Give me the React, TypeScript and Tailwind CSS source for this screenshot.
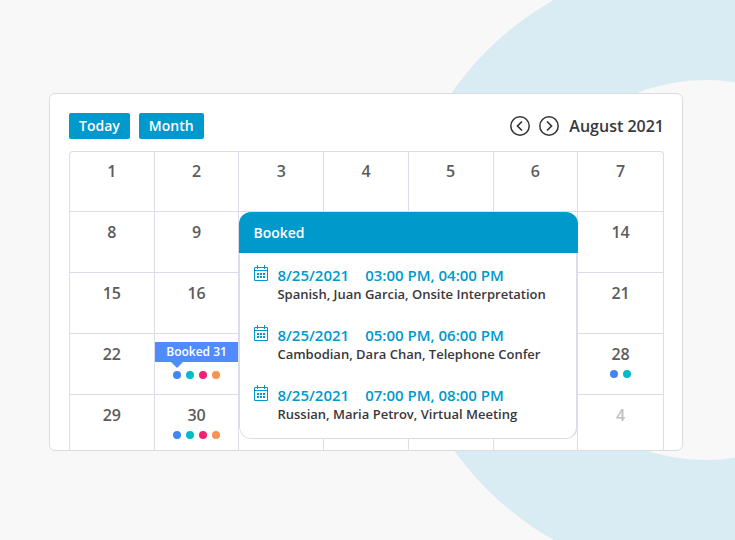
type Day = {
  day?: number;
  dots?: string[];
  tag?: string;
  muted?: boolean;
};

const allDots = ["bg-[#4285f4]", "bg-[#00bccb]", "bg-[#f0226f]", "bg-[#f9924f]"];
const twoDots = ["bg-[#4285f4]", "bg-[#00bccb]"];

// Days under the open popover stay empty
const weeks: Day[][] = [
  [{ day: 1 }, { day: 2 }, { day: 3 }, { day: 4 }, { day: 5 }, { day: 6 }, { day: 7 }],
  [{ day: 8 }, { day: 9 }, {}, {}, {}, {}, { day: 14 }],
  [{ day: 15 }, { day: 16 }, {}, {}, {}, {}, { day: 21 }],
  [{ day: 22 }, { tag: "Booked 31", dots: allDots }, {}, {}, {}, {}, { day: 28, dots: twoDots }],
  [{ day: 29 }, { day: 30, dots: allDots }, {}, {}, {}, {}, { day: 4, muted: true }],
];

const bookings = [
  { date: "8/25/2021", time: "03:00 PM, 04:00 PM", details: "Spanish, Juan Garcia, Onsite Interpretation" },
  { date: "8/25/2021", time: "05:00 PM, 06:00 PM", details: "Cambodian, Dara Chan, Telephone Confer" },
  { date: "8/25/2021", time: "07:00 PM, 08:00 PM", details: "Russian, Maria Petrov, Virtual Meeting" },
];

function CalendarIcon() {
  return (
    <svg className="w-3.5 h-4 shrink-0" viewBox="0 0 14 16" fill="none" stroke="#0099cc" aria-hidden="true">
      <path d="M0.5 2.5H13.5V15.5H0.5ZM0.5 5.5H13.5M3.5 0V4M10.5 0V4" />
      <path d="M3 9H5M6 9H8M9 9H11M3 12H5M6 12H8M9 12H11" strokeWidth={2} />
    </svg>
  );
}

function ArrowButton({ label, d }: { label: string; d: string }) {
  return (
    <button type="button" aria-label={label} className="cursor-pointer text-[#333]">
      <svg className="w-5 h-5" viewBox="0 0 20 20" fill="none" stroke="currentColor" strokeWidth={1.5}>
        <circle cx="10" cy="10" r="9.2" />
        <path d={d} strokeWidth={1.7} />
      </svg>
    </button>
  );
}

function DayCell({ day, dots, tag, muted }: Day) {
  return (
    <td className="p-0 align-top border-r border-t border-[#dcdcea] last:border-r-0 group-first:border-t-0">
      {tag && (
        <div className="relative mt-2 h-5 bg-[#508cff] text-white text-xs leading-5 text-center">
          {tag}
          <span className="absolute left-4 top-full border-x-[6px] border-t-[6px] border-x-transparent border-t-[#508cff]" />
        </div>
      )}
      {day && (
        <div
          className={`pt-2.5 group-first:pt-[9px] text-base leading-5 text-center ${muted ? "text-[#bfbfbf]" : "text-[#5c5c5c]"}`}
        >
          {day}
        </div>
      )}
      {dots && (
        <div className={`flex justify-center gap-[5px] ${tag ? "mt-[9px]" : "mt-1.5"}`}>
          {dots.map((color) => (
            <span key={color} className={`w-2 h-2 rounded-full ${color}`} />
          ))}
        </div>
      )}
    </td>
  );
}

function BookedPopover() {
  return (
    <section className="absolute left-2/7 top-[60px] w-4/7 rounded-xl overflow-hidden bg-white">
      <h2 className="h-[41px] px-3.5 bg-[#0099cc] text-white text-sm leading-[41px]">Booked</h2>
      <ul className="flex flex-col gap-[22px] pl-3.5 pr-3 pt-3 pb-[15px] border border-t-0 border-r-2 border-[#dcdcee] rounded-b-xl">
        {bookings.map((booking) => (
          <li key={booking.time} className="flex gap-[9px]">
            <CalendarIcon />
            <div>
              <p className="flex gap-4 text-[15px] leading-5 text-[#0099cc] whitespace-nowrap">
                <span>{booking.date}</span>
                <span>{booking.time}</span>
              </p>
              <p className="text-[13px] leading-[18px] text-[#38383d] whitespace-nowrap">{booking.details}</p>
            </div>
          </li>
        ))}
      </ul>
    </section>
  );
}

export default function App() {
  return (
    <main className="relative min-h-screen overflow-hidden bg-[#f8f8f8] pl-[49px] pr-[52px] py-[93px] font-['Open_Sans',sans-serif] font-semibold">
      {/* Background ring */}
      <div className="absolute left-[396px] top-[-40px] w-[620px] h-[620px] rounded-full border-[120px] border-[#d9ebf3]" />

      <div className="relative pl-[19px] pr-[18px] pt-[19px] bg-white border border-[#dcdcdf] rounded-md overflow-hidden">
        <header className="flex items-center justify-between mb-3">
          <div className="flex gap-[9px]">
            <button type="button" className="h-[26px] px-2.5 rounded-xs bg-[#0099cc] text-white text-sm cursor-pointer">
              Today
            </button>
            <button type="button" className="h-[26px] px-2.5 rounded-xs bg-[#0099cc] text-white text-sm cursor-pointer">
              Month
            </button>
          </div>
          <div className="flex items-center gap-2.5">
            <div className="flex gap-[9px]">
              <ArrowButton label="Previous month" d="M12 5.5L7.5 10L12 14.5" />
              <ArrowButton label="Next month" d="M8 5.5L12.5 10L8 14.5" />
            </div>
            <h1 className="text-base leading-5 text-[#38383d]">August 2021</h1>
          </div>
        </header>

        <div className="relative border border-b-0 border-[#dcdcea] rounded-t-sm">
          <table className="w-full table-fixed border-separate border-spacing-0">
            <tbody>
              {weeks.map((week, i) => (
                <tr key={i} className="group h-[61px] first:h-[59px] last:h-14">
                  {week.map((day, j) => (
                    <DayCell key={j} {...day} />
                  ))}
                </tr>
              ))}
            </tbody>
          </table>
          <BookedPopover />
        </div>
      </div>
    </main>
  );
}
